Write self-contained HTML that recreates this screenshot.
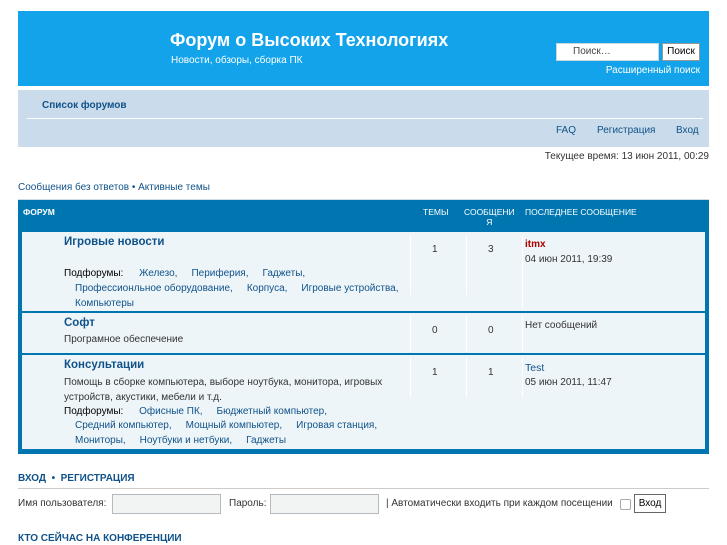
<!DOCTYPE html><html><head><meta charset="utf-8"><style>
body{margin:0;width:727px;height:545px;position:relative;background:#fff;font-family:"Liberation Sans","DejaVu Sans",sans-serif;font-size:10px;color:#333;overflow:hidden}
.a{position:absolute;white-space:nowrap}
.l{color:#105289}
.t{color:#105289;font-weight:bold;font-size:11.5px}
.s{color:#536482}
</style></head><body>
<div class="a" style="left:18px;top:11px;width:691px;height:75px;background:#12a3eb"></div>
<div class="a" style="left:170px;top:30px;color:#fff;font-weight:bold;font-size:18px">Форум о Высоких Технологиях</div>
<div class="a" style="left:171px;top:55px;color:#fff;font-size:10px">Новости, обзоры, сборка ПК</div>
<div class="a" style="left:556px;top:43px;width:103px;height:18px;background:#fff;border:1px solid #c7d6e0;box-sizing:border-box;color:#444;padding:2px 0 0 16px;font-size:10px">Поиск…</div>
<div class="a" style="left:662px;top:43px;width:38px;height:18px;background:#fff;border:1px solid #999;box-sizing:border-box;color:#000;text-align:center;padding-top:2px;font-size:10px">Поиск</div>
<div class="a" style="right:27px;top:65px;color:#fff;font-size:10px">Расширенный поиск</div>
<div class="a" style="left:18px;top:90px;width:691px;height:57px;background:#cadceb"></div>
<div class="a" style="left:27px;top:118px;width:676px;height:1px;background:#fff"></div>
<div class="a" style="left:42px;top:100px;color:#105289;font-weight:bold;font-size:10px">Список форумов</div>
<div class="a l" style="left:556px;top:125px">FAQ</div>
<div class="a l" style="left:597px;top:125px">Регистрация</div>
<div class="a l" style="left:676px;top:125px">Вход</div>
<div class="a" style="right:18px;top:151px">Текущее время: 13 июн 2011, 00:29</div>
<div class="a l" style="left:18px;top:182px">Сообщения без ответов • Активные темы</div>
<div class="a" style="left:18px;top:199px;width:691px;height:1px;background:#ccdde8"></div>
<div class="a" style="left:18px;top:200px;width:691px;height:254px;background:#0076b1"></div>
<div class="a" style="left:23px;top:207px;color:#fff;font-weight:bold;font-size:8.5px">ФОРУМ</div>
<div class="a" style="left:423px;top:207px;color:#fff;font-size:8.5px">ТЕМЫ</div>
<div class="a" style="left:464px;top:207px;color:#fff;font-size:8.5px;text-align:center;line-height:10px">СООБЩЕНИ<br>Я</div>
<div class="a" style="left:525px;top:207px;color:#fff;font-size:8.5px">ПОСЛЕДНЕЕ СООБЩЕНИЕ</div>
<div class="a" style="left:22px;top:232px;width:683px;height:79px;background:#eef5f9"></div>
<div class="a" style="left:22px;top:313px;width:683px;height:40px;background:#eef5f9"></div>
<div class="a" style="left:22px;top:355px;width:683px;height:94px;background:#eef5f9"></div>
<div class="a" style="left:410px;top:235px;width:1px;height:60px;background:#fff"></div>
<div class="a" style="left:466px;top:235px;width:1px;height:60px;background:#fff"></div>
<div class="a" style="left:522px;top:235px;width:1px;height:73px;background:#fff"></div>
<div class="a" style="left:410px;top:316px;width:1px;height:36px;background:#fff"></div>
<div class="a" style="left:466px;top:316px;width:1px;height:36px;background:#fff"></div>
<div class="a" style="left:522px;top:316px;width:1px;height:36px;background:#fff"></div>
<div class="a" style="left:410px;top:358px;width:1px;height:40px;background:#fff"></div>
<div class="a" style="left:466px;top:358px;width:1px;height:40px;background:#fff"></div>
<div class="a" style="left:522px;top:358px;width:1px;height:40px;background:#fff"></div>
<div class="a t" style="left:64px;top:236px">Игровые новости</div>
<div class="a" style="left:64px;top:266px;line-height:15px;color:#000">Подфорумы: <span class="l" style="margin-left:13px">Железо,</span><span class="l" style="margin-left:14px">Периферия,</span><span class="l" style="margin-left:14px">Гаджеты,</span></div>
<div class="a l" style="left:75px;top:281px;line-height:15px">Профессионльное оборудование,<span style="margin-left:14px">Корпуса,</span><span style="margin-left:14px">Игровые устройства,</span><br>Компьютеры</div>
<div class="a" style="left:432px;top:244px">1</div>
<div class="a" style="left:488px;top:244px">3</div>
<div class="a" style="left:525px;top:239px;color:#aa0000;font-weight:bold">itmx</div>
<div class="a" style="left:525px;top:254px">04 июн 2011, 19:39</div>
<div class="a t" style="left:64px;top:317px">Софт</div>
<div class="a" style="left:64px;top:334px">Програмное обеспечение</div>
<div class="a" style="left:432px;top:325px">0</div>
<div class="a" style="left:488px;top:325px">0</div>
<div class="a" style="left:525px;top:320px">Нет сообщений</div>
<div class="a t" style="left:64px;top:359px">Консультации</div>
<div class="a" style="left:64px;top:375px;line-height:15px">Помощь в сборке компьютера, выборе ноутбука, монитора, игровых<br>устройств, акустики, мебели и т.д.</div>
<div class="a" style="left:64px;top:404px;line-height:15px;color:#000">Подфорумы: <span class="l" style="margin-left:13px">Офисные ПК,</span><span class="l" style="margin-left:14px">Бюджетный компьютер,</span></div>
<div class="a l" style="left:75px;top:418px;line-height:15px">Средний компьютер,<span style="margin-left:14px">Мощный компьютер,</span><span style="margin-left:14px">Игровая станция,</span><br>Мониторы,<span style="margin-left:14px">Ноутбуки и нетбуки,</span><span style="margin-left:14px">Гаджеты</span></div>
<div class="a" style="left:432px;top:367px">1</div>
<div class="a" style="left:488px;top:367px">1</div>
<div class="a l" style="left:525px;top:362px;font-size:10.5px">Test</div>
<div class="a" style="left:525px;top:377px">05 июн 2011, 11:47</div>
<div class="a l" style="left:18px;top:473px;font-weight:bold;font-size:10px">ВХОД &nbsp;•&nbsp; РЕГИСТРАЦИЯ</div>
<div class="a" style="left:18px;top:488px;width:691px;height:1px;background:#ccc"></div>
<div class="a" style="left:18px;top:498px">Имя пользователя:</div>
<div class="a" style="left:112px;top:494px;width:109px;height:20px;background:#f2f3f3;border:1px solid #b4bac0;box-sizing:border-box"></div>
<div class="a" style="left:229px;top:498px">Пароль:</div>
<div class="a" style="left:270px;top:494px;width:109px;height:20px;background:#f2f3f3;border:1px solid #b4bac0;box-sizing:border-box"></div>
<div class="a" style="left:386px;top:498px">| Автоматически входить при каждом посещении</div>
<div class="a" style="left:620px;top:499px;width:11px;height:11px;background:#fff;border:1px solid #aaa;border-radius:2px;box-sizing:border-box"></div>
<div class="a" style="left:634px;top:494px;width:32px;height:19px;background:#fff;border:1px solid #666;box-sizing:border-box;color:#000;text-align:center;padding-top:3px">Вход</div>
<div class="a l" style="left:18px;top:533px;font-weight:bold;font-size:10px">КТО СЕЙЧАС НА КОНФЕРЕНЦИИ</div>
</body></html>
